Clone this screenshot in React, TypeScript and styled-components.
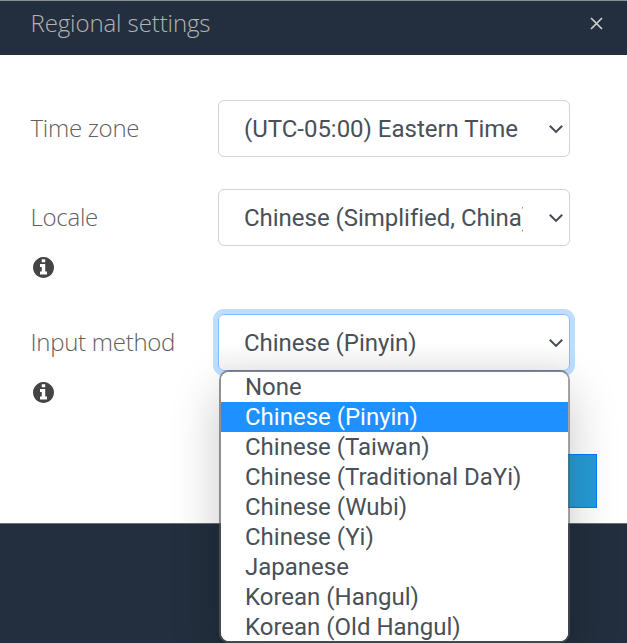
import React from "react";
import styled, { createGlobalStyle, css } from "styled-components";

const GlobalStyle = createGlobalStyle`
  *, *::before, *::after { box-sizing: border-box; }
  body { margin: 0; background: #232f3e; overflow: hidden; }
`;

const Page = styled.div`
  height: 643px;
  overflow: hidden;
  background: #232f3e;
  font-family: "Open Sans", "Noto Sans", sans-serif;
`;

const Dialog = styled.section`
  display: flex;
  flex-direction: column;
  height: 524px;
  background: #fff;
  border-top: 1px solid #8b9096;
  border-bottom: 1px solid #6d7073;
`;

const Header = styled.header`
  display: flex;
  align-items: flex-start;
  justify-content: space-between;
  height: 54px;
  padding: 6px 23px 0 30.5px;
  background: #232f3e;
  color: #b4b4b4;
`;

const Title = styled.h1`
  margin: 0;
  font-size: 24px;
  line-height: 32px;
  font-weight: 300;
  letter-spacing: -0.1px;
`;

const CloseButton = styled.button`
  display: flex;
  margin: 9px 0 0;
  padding: 0;
  border: 0;
  background: none;
  color: #cfcfcf;
`;

const Form = styled.div`
  display: flex;
  flex-direction: column;
  gap: 32px;
  padding: 45px 57px 0 30.5px;
`;

const Row = styled.div<{ $info?: boolean }>`
  display: grid;
  grid-template-columns: 187.5px 352px;
  align-items: start;
  height: ${(p) => (p.$info ? 93 : 57)}px;
`;

const LabelColumn = styled.div`
  display: flex;
  flex-direction: column;
  color: #444;
`;

const Label = styled.label`
  font-size: 24px;
  line-height: 55px;
  font-weight: 300;
  white-space: nowrap;
  color: #606060;
  letter-spacing: -0.27px;
`;

const InfoSvg = styled.svg`
  width: 21px;
  height: 21px;
  margin: 13px 0 0 2.7px;
`;

const SelectWrap = styled.div`
  position: relative;
`;

const SelectBox = styled.div<{ $focused?: boolean }>`
  display: flex;
  align-items: center;
  justify-content: space-between;
  height: 57px;
  padding: 0 6px 0 25px;
  border: 1px solid #ced4da;
  border-radius: 6px;
  background: #fff;
  color: #495057;
  font: 400 24px/36px Roboto, sans-serif;
  ${(p) =>
    p.$focused &&
    css`
      border-color: #80bdff;
      background: linear-gradient(#fff 50%, #f3f3f3);
      box-shadow: 0 0 0 5px #bfdeff;
    `}
`;

const Value = styled.span`
  width: 279px;
  overflow: hidden;
  white-space: nowrap;
  letter-spacing: -0.02px;
`;

const Menu = styled.ul`
  position: absolute;
  z-index: 1;
  top: 56px;
  left: 1px;
  width: 351px;
  height: 273px;
  margin: 0;
  padding: 0;
  overflow: hidden;
  list-style: none;
  border: 2px solid rgba(90, 90, 90, 0.65);
  border-right-color: rgba(90, 90, 90, 0.55);
  border-radius: 10px;
  background: #fff;
  background-clip: padding-box;
  box-shadow: 0 20px 48px rgba(0, 0, 0, 0.22);
`;

const Option = styled.li<{ $selected?: boolean }>`
  height: 30px;
  padding-left: 24px;
  font: 400 24px/30px Roboto, sans-serif;
  white-space: nowrap;
  color: ${(p) => (p.$selected ? "#fff" : "#495057")};
  background: ${(p) => (p.$selected ? "#1e90ff" : "#fff")};
`;

const Footer = styled.footer`
  display: flex;
  justify-content: flex-end;
  padding: 47px 30px 0;
`;

const SaveButton = styled.button`
  width: 110px;
  height: 54px;
  border: 1px solid #007bff;
  background: #259dd5;
`;

const methods = [
  "None",
  "Chinese (Pinyin)",
  "Chinese (Taiwan)",
  "Chinese (Traditional DaYi)",
  "Chinese (Wubi)",
  "Chinese (Yi)",
  "Japanese",
  "Korean (Hangul)",
  "Korean (Old Hangul)",
];

const InfoIcon = () => (
  <InfoSvg viewBox="0 0 1536 1536" fill="currentColor" aria-hidden="true">
    <path d="M1024 1248v-160q0-14-9-23t-23-9h-96v-512q0-14-9-23t-23-9h-320q-14 0-23 9t-9 23v160q0 14 9 23t23 9h96v320h-96q-14 0-23 9t-9 23v160q0 14 9 23t23 9h448q14 0 23-9t9-23zM896 352v-160q0-14-9-23t-23-9h-192q-14 0-23 9t-9 23v160q0 14 9 23t23 9h192q14 0 23-9t9-23zM1536 768q0 209-103 385.5t-279.5 279.5-385.5 103-385.5-103-279.5-279.5-103-385.5 103-385.5 279.5-279.5 385.5-103 385.5 103 279.5 279.5 103 385.5z" />
  </InfoSvg>
);

const Chevron = () => (
  <svg width="15" height="10" viewBox="0 0 15 10" fill="none" aria-hidden="true">
    <path d="M1.8 1.7 8 7.9 14.2 1.7" stroke="#434a51" strokeWidth="2" />
  </svg>
);

interface FieldProps {
  label: string;
  value: string;
  info?: boolean;
  options?: string[];
}

const Field = ({ label, value, info, options }: FieldProps) => (
  <Row $info={info}>
    <LabelColumn>
      <Label>{label}</Label>
      {info && <InfoIcon />}
    </LabelColumn>
    <SelectWrap>
      <SelectBox $focused={!!options}>
        <Value>{value}</Value>
        <Chevron />
      </SelectBox>
      {options && (
        <Menu>
          {options.map((o) => (
            <Option key={o} $selected={o === value}>
              {o}
            </Option>
          ))}
        </Menu>
      )}
    </SelectWrap>
  </Row>
);

export default function App() {
  return (
    <Page>
      <GlobalStyle />
      <Dialog>
        <Header>
          <Title>Regional settings</Title>
          <CloseButton aria-label="Close">
            <svg width="15" height="15" viewBox="0 0 15 15" fill="none">
              <path d="m2 2 11 11M13 2 2 13" stroke="currentColor" strokeWidth="1.7" />
            </svg>
          </CloseButton>
        </Header>
        <Form>
          <Field label="Time zone" value="(UTC-05:00) Eastern Time" />
          <Field label="Locale" value="Chinese (Simplified, China)" info />
          <Field label="Input method" value="Chinese (Pinyin)" info options={methods} />
        </Form>
        <Footer>
          <SaveButton aria-label="Save" />
        </Footer>
      </Dialog>
    </Page>
  );
}
